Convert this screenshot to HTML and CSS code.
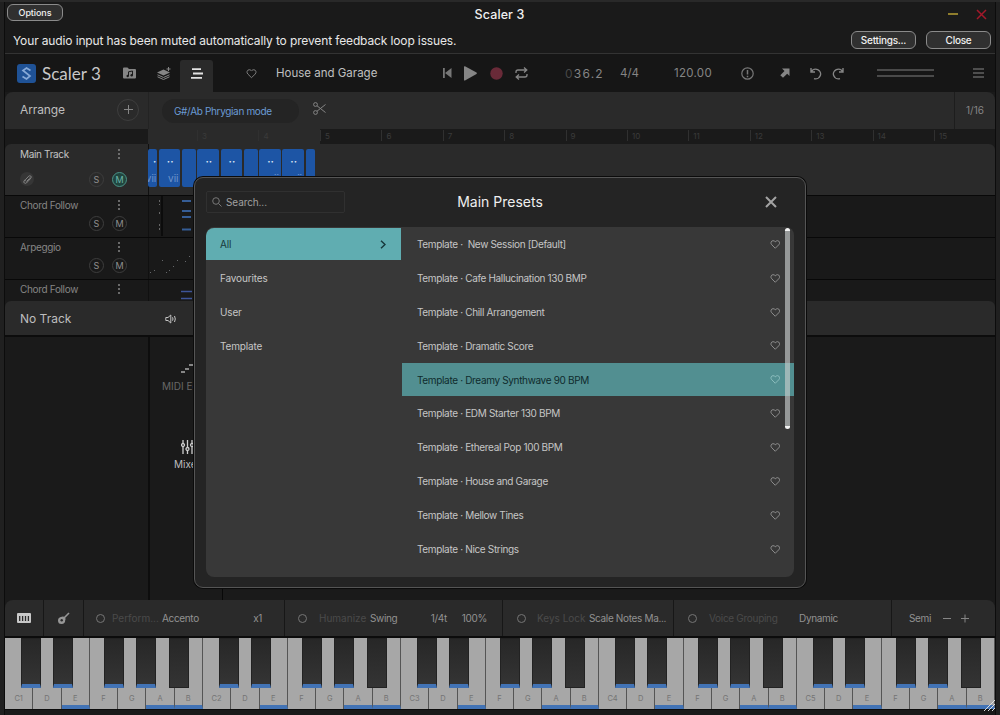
FILE: index.html
```html
<!DOCTYPE html>
<html lang="en">

<head>
    <meta charset="UTF-8">
    <meta name="viewport" content="width=device-width, initial-scale=1.0">
    <title>Scaler 3</title>
    <link rel="stylesheet" href="styles.css">
</head>

<body>

    <svg class="defs">
        <symbol id="heart" viewBox="0 0 12 12">
            <path d="M6 10.600 2 6.600C.3 4.900 1.100 2 3.400 1.900 4.600 1.800 5.500 2.500 6 3.300c.5-.8 1.400-1.500 2.600-1.400C10.900 2 11.700 4.900 10 6.600z" fill="none" stroke="currentColor" stroke-linejoin="round" />
        </symbol>
        <symbol id="dots" viewBox="0 0 4 12">
            <circle cx="2" cy="2" r="1" /><circle cx="2" cy="6" r="1" /><circle cx="2" cy="10" r="1" />
        </symbol>
    </svg>

    <div class="window">
        <header class="titlebar">
            <button class="pill options">Options</button>
            <h1>Scaler 3</h1>
            <svg class="window-buttons" width="40" height="12" fill="none">
                <path d="M1 6h10" stroke="#8f7d2c" stroke-width="2" />
                <path d="m30 2 9 9m0-9-9 9" stroke="#a3182a" stroke-width="1.500" />
            </svg>
        </header>

        <div class="notice">
            <p>Your audio input has been muted automatically to prevent feedback loop issues.</p>
            <button class="pill">Settings...</button>
            <button class="pill">Close</button>
        </div>

        <div class="toolbar">
            <svg class="logo" width="19" height="19" viewBox="0 0 19 19" fill="none">
                <rect width="19" height="19" rx="3" fill="#1f5296" />
                <path d="M13.500 6.500 9.500 4 6 6.500l7 5.500-3.500 3-4-2.500" stroke="#86a9d8" stroke-width="1.700" />
            </svg>
            <span class="brand">Scaler 3</span>
            <svg class="folder" width="13" height="12" viewBox="0 0 13 12">
                <path d="M0 1.500Q0 .5 1 .5h3.500L6 2h6q1 0 1 1v7.500q0 1-1 1H1q-1 0-1-1z" fill="#858585" />
                <path d="M5.500 9V4.800L9.500 4v4" stroke="#1a1a1a" fill="none" /><circle cx="4.700" cy="9" r="1.200" fill="#1a1a1a" /><circle cx="8.700" cy="8.200" r="1.200" fill="#1a1a1a" />
            </svg>
            <svg class="layers" width="14" height="13" viewBox="0 0 14 13">
                <path d="M6.500 2.500 13 5.500 6.500 8.500 0 5.500z" fill="#858585" />
                <path d="m.5 7.800 6 2.700 6-2.700M.5 9.800l6 2.700 6-2.700M11.500 0v4m-2-2h4" stroke="#858585" fill="none" />
            </svg>
            <div class="tab">
                <svg width="12" height="11" stroke="#e2e2e2" stroke-width="1.800"><path d="M1 1.200h9M2 5.500h10M0 9.800h11" /></svg>
            </div>
            <svg class="fav" width="11" height="11"><use href="#heart" /></svg>
            <span class="project">House and Garage</span>

            <div class="transport">
                <svg width="9" height="10" fill="#777"><path d="M0 0h1.800v10H0zM8.500 0v10L2 5z" /></svg>
                <svg width="13" height="15" fill="#858585"><path d="M0 .8Q0 0 1 .3l11.500 6.200q.8.8 0 1.500L1 14.500q-1 .3-1-.6z" /></svg>
                <svg width="13" height="13"><circle cx="6.500" cy="6.500" r="6.200" fill="#692a38" /></svg>
                <svg width="13" height="13" fill="none" stroke="#858585" stroke-width="1.300"><path d="M1 6V5q0-2 2-2h8.500M9 .5 11.800 3 9 5.500M12 7v1q0 2-2 2H1.500M4 7.500 1.200 10 4 12.500" /></svg>
            </div>
            <span class="position"><i>0</i>36.2</span>
            <span class="meter">4/4</span>
            <span class="tempo">120.00</span>
            <svg class="info" width="13" height="13" fill="none" stroke="#777" stroke-width="1.200"><circle cx="6.500" cy="6.500" r="5.700" /><path d="M6.500 3v4.500M6.500 8.700v1.500" stroke-width="1.500" /></svg>
            <svg class="arrow" width="10" height="10" fill="#858585"><path d="M2 .5h7.500V8L7.200 5.800 3 9.800.3 7.200l4.200-4.300z" /></svg>
            <svg class="undo" width="12" height="13" fill="none" stroke="#858585" stroke-width="1.400"><path d="M1 1v4h4M1.300 4.800A4.900 4.900 0 1 1 4 11.600" /></svg>
            <svg class="redo" width="12" height="13" fill="none" stroke="#858585" stroke-width="1.400"><path d="M11 1v4H7M10.700 4.800A4.900 4.900 0 1 0 8 11.600" /></svg>
            <div class="level"></div>
            <svg class="menu" width="11" height="10" stroke="#858585" stroke-width="1.200"><path d="M0 1h11M0 5h11M0 9h11" /></svg>
        </div>

        <div class="arrange">
            <div class="arrange-title">
                <h2>Arrange</h2>
                <button class="add"><svg width="9" height="9" stroke="#858585"><path d="M4.500 0v9M0 4.500h9" /></svg></button>
            </div>
            <span class="scale">G#/Ab Phrygian mode</span>
            <svg class="scissors" width="13" height="13" fill="none" stroke="#858585"><circle cx="2.500" cy="2.500" r="1.900" /><circle cx="2.500" cy="10.500" r="1.900" /><path d="m4 3.800 8.500 6.700M4 9.200l8.500-6.700" /></svg>
            <span class="grid-size">1/16</span>
        </div>

        <div class="ruler">
            <div class="region"><span>3</span><span>4</span></div>
            <span>5</span><span>6</span><span>7</span><span>8</span><span>9</span><span>10</span><span>11</span><span>12</span><span>13</span><span>14</span><span>15</span>
        </div>

        <div class="tracks">
            <div class="track main">
                <div class="track-head">
                    <div class="track-name">Main Track<svg class="more"><use href="#dots" /></svg></div>
                    <div class="track-buttons">
                        <span class="link"><svg width="9" height="9" viewBox="0 0 9 9" fill="none" stroke="#858585"><path d="M3.500 6.500 6.300 3.700M2.200 4.500 1 6q-.6 1.300.4 2 1 .7 2 0l3.300-3.500q.8-1 0-1.800M6 4.800 7.900 3q.8-1.200-.2-2-1-.6-2 .2L2.600 4.500q-.7 1 .2 1.700" /></svg></span>
                        <span class="round">S</span><span class="round muted">M</span>
                    </div>
                </div>
                <div class="clips">
                    <div class="clip first"><b>·</b>vii</div>
                    <div class="clip long"><b>··</b>vii</div>
                    <div class="clip short"></div>
                    <div class="clip long"><b>··</b>v</div>
                    <div class="clip long"><b>··</b>v</div>
                    <div class="clip short"></div>
                    <div class="clip long"><b>··</b>vii</div>
                    <div class="clip long"><b>··</b>vii</div>
                    <div class="clip last"></div>
                </div>
            </div>
            <div class="track">
                <div class="track-head">
                    <div class="track-name">Chord Follow<svg class="more"><use href="#dots" /></svg></div>
                    <div class="track-buttons"><span class="round">S</span><span class="round">M</span></div>
                </div>
                <svg class="notes" width="46" height="41">
                    <path d="M11.500 4v5m0 7v3m0 9v7" stroke="#666" stroke-dasharray="2 2" /><path d="M14 0v40" stroke="#000" />
                    <path d="M34 5h9M34 15h9M34 21h9M34 33.500h9" stroke="#355d96" stroke-width="2" />
                </svg>
            </div>
            <div class="track">
                <div class="track-head">
                    <div class="track-name">Arpeggio<svg class="more"><use href="#dots" /></svg></div>
                    <div class="track-buttons"><span class="round">S</span><span class="round">M</span></div>
                </div>
                <svg class="notes" width="46" height="41" fill="#65676a">
                    <path d="M2 34h1v1H2zM6 32h1v1H6zM14 22h1v1h-1zM18 34h1v1h-1zM21 32h1v1h-1zM25 28h1v1h-1zM29 22h1v1h-1zM37 23h1v1h-1zM41 18h1v1h-1z" />
                </svg>
            </div>
            <div class="track cut">
                <div class="track-head">
                    <div class="track-name">Chord Follow<svg class="more"><use href="#dots" /></svg></div>
                </div>
                <svg class="notes" width="46" height="21"><path d="M33 11.500h11M33 18.500h11" stroke="#3e5599" stroke-width="1.500" /></svg>
            </div>
        </div>

        <div class="selected-track">
            <h2>No Track</h2>
            <svg class="speaker" width="12" height="10" fill="none" stroke="#c4c4c4"><path d="M.8 3.500H3L5.800 1v8L3 6.500H.8zM7.500 3.300q1 1.700 0 3.400M9.500 2q1.600 3 0 6" /></svg>
        </div>

        <div class="editor">
            <div class="editor-side"></div>
            <nav class="editor-nav">
                <svg class="midi-icon" width="13" height="10" stroke="#aaa" stroke-width="1.500"><path d="M0 9h4M4 6h4M8 2h4" /></svg>
                <span class="dim">MIDI Edit</span>
                <svg class="mixer-icon" width="13" height="14" fill="none" stroke="#ccc" stroke-width="1.300"><path d="M2 0v3M2 7v7M6.500 0v7M6.500 11v3M11 0v3M11 7v7" /><circle cx="2" cy="5" r="1.500" /><circle cx="6.500" cy="9" r="1.500" /><circle cx="11" cy="5" r="1.500" /></svg>
                <span class="mixer-label">Mixer</span>
            </nav>
        </div>

        <div class="performance">
            <div class="cell view">
                <svg width="14" height="10"><rect width="14" height="10" rx="1" fill="#c8c8c8" /><path d="M2.700 3v5M5.600 3v5M8.500 3v5M11.400 3v5" stroke="#2a2a2a" stroke-width="1.300" /></svg>
            </div>
            <div class="cell view">
                <svg width="13" height="13"><path d="M4.800 4.800Q6.500 4 8 5.500q1.200 1.700.2 2.800Q8.300 11.800 4.500 12 1 12 1 8.500 1 5.500 4.800 4.800z" fill="#969696" /><path d="m5 8 7-7" stroke="#969696" stroke-width="1.600" /><circle cx="4.700" cy="8.300" r="1.200" fill="#2a2a2a" /></svg>
            </div>
            <div class="cell perform"><i class="dot"></i><em>Perform...</em><span>Accento</span><span class="right">x1</span></div>
            <div class="cell humanize"><i class="dot"></i><em>Humanize</em><span>Swing</span><span class="right">1/4t</span><span class="percent">100%</span></div>
            <div class="cell lock"><i class="dot"></i><em>Keys Lock</em><span>Scale Notes Ma...</span></div>
            <div class="cell voice"><i class="dot"></i><em>Voice Grouping</em><span>Dynamic</span></div>
            <div class="cell semi"><span>Semi</span>
                <svg width="28" height="9" stroke="#858585"><path d="M1 4.500h8M19 4.500h8M23 .5v8" /></svg>
            </div>
        </div>

        <div class="keyboard" id="keyboard"></div>
        <svg class="grip" width="11" height="11" stroke="#ddd"><path d="M0 11 11 0M4 11l7-7M8 11l3-3" /></svg>
    </div>

    <div class="presets">
        <div class="presets-header">
            <div class="search">
                <svg width="10" height="10" fill="none" stroke="#777"><circle cx="4" cy="4" r="3.300" /><path d="m6.500 6.500 3 3" /></svg>
                <span>Search...</span>
            </div>
            <h2>Main Presets</h2>
            <svg class="close" width="12" height="12" stroke="#a3a3a3" stroke-width="2"><path d="m1 1 10 10m0-10L1 11" /></svg>
        </div>
        <div class="presets-body">
            <ul class="categories">
                <li class="active">All<svg width="6" height="9" fill="none" stroke="#17393c" stroke-width="1.500"><path d="m1 .8 4 3.700-4 3.700" /></svg></li>
                <li>Favourites</li>
                <li>User</li>
                <li>Template</li>
            </ul>
            <ul class="items">
                <li>Template ·&nbsp; New Session [Default]<svg><use href="#heart" /></svg></li>
                <li>Template · Cafe Hallucination 130 BMP<svg><use href="#heart" /></svg></li>
                <li>Template · Chill Arrangement<svg><use href="#heart" /></svg></li>
                <li>Template · Dramatic Score<svg><use href="#heart" /></svg></li>
                <li class="active">Template · Dreamy Synthwave 90 BPM<svg><use href="#heart" /></svg></li>
                <li>Template · EDM Starter 130 BPM<svg><use href="#heart" /></svg></li>
                <li>Template · Ethereal Pop 100 BPM<svg><use href="#heart" /></svg></li>
                <li>Template · House and Garage<svg><use href="#heart" /></svg></li>
                <li>Template · Mellow Tines<svg><use href="#heart" /></svg></li>
                <li>Template · Nice Strings<svg><use href="#heart" /></svg></li>
            </ul>
            <div class="scrollbar"></div>
        </div>
    </div>

    <script>
        // five octaves, keys in the current scale get a blue marker
        const keyboard = document.getElementById('keyboard');
        const inScale = ['E', 'A', 'B'];
        const sharps = { C: true, D: true, F: true, G: true, A: false };

        for (let octave = 1; octave <= 5; octave++) {
            for (const note of 'CDEFGAB') {
                const key = document.createElement('div');
                key.className = 'key' + (inScale.includes(note) ? ' on' : '');
                key.textContent = note === 'C' ? note + octave : note;
                if (note in sharps) {
                    const sharp = document.createElement('div');
                    sharp.className = 'sharp sharp-' + note.toLowerCase() + (sharps[note] ? ' on' : '');
                    key.appendChild(sharp);
                }
                keyboard.appendChild(key);
            }
        }
    </script>

</body>

</html>
```
FILE: styles.css
```css
* {
    box-sizing: border-box;
}

body {
    margin: 0;
    width: 1000px;
    height: 715px;
    overflow: hidden;
    position: relative;
    background-color: #1a1a1a;
    color: #a0a0a0;
    font-family: Inter, "Liberation Sans", sans-serif;
    font-size: 10px;
    letter-spacing: -0.34px;
    white-space: nowrap;
}

h1,
h2,
p,
ul {
    margin: 0;
    padding: 0;
    font-weight: 400;
}

svg {
    display: block;
    flex: none;
}

.defs {
    position: absolute;
    width: 0;
    height: 0;
}

.window {
    height: 715px;
    padding: 0 5px;
    border-top: 2px solid #292929;
    box-shadow: inset 4px 0 #202020, inset 5px 0 #0c0c0c, inset -4px 0 #202020, inset -5px 0 #0c0c0c;
    display: flex;
    flex-direction: column;
}

/* title bar and notice */
.titlebar {
    height: 25px;
    display: grid;
    grid-template-columns: 1fr auto 1fr;
    align-items: center;
    padding: 0 8px 0 2px;
    letter-spacing: 0;
}

.titlebar h1 {
    margin-left: 5px;
    color: #f0f0f0;
    font-size: 12.5px;
    font-weight: 500;
    letter-spacing: 0.1px;
}

.window-buttons {
    justify-self: end;
    margin-top: -2px;
}

.pill {
    width: 65px;
    height: 18px;
    padding: 0;
    border: 1px solid #8b8b8b;
    border-radius: 6px;
    background-color: #303030;
    color: #f0f0f0;
    font: 500 10px Inter, sans-serif;
    letter-spacing: -0.25px;
}

.pill.options {
    width: 56px;
    height: 17px;
    font-size: 9px;
    letter-spacing: -0.1px;
    margin-top: -4px;
}

.notice {
    height: 27px;
    display: flex;
    align-items: center;
    gap: 10px;
    padding: 0 4px 0 8px;
    border-bottom: 1px solid #333;
}

.notice p {
    flex: 1;
    color: #e8e8e8;
    font-size: 12px;
    letter-spacing: -0.13px;
}

/* main toolbar */
.toolbar {
    height: 38px;
    display: flex;
    align-items: center;
    padding-left: 12px;
    background-color: #161616;
    letter-spacing: 0;
}

.brand {
    width: 76px;
    margin-left: 6px;
    color: #c8c8c8;
    font: 400 17px Lato, sans-serif;
}

.folder {
    margin-left: 5px;
}

.layers {
    margin-left: 21px;
}

.tab {
    width: 33px;
    height: 32px;
    margin: 6px 0 0 9px;
    border-radius: 3px 3px 0 0;
    background-color: #2a2a2a;
    display: flex;
    align-items: center;
    justify-content: center;
    padding-bottom: 6px;
}

.fav {
    margin-left: 33px;
    color: #858585;
}

.project {
    width: 167px;
    margin-left: 19px;
    color: #c0c0c0;
    font-size: 11.5px;
}

.transport {
    display: flex;
    align-items: center;
    gap: 12.3px;
    width: 122px;
}

.position {
    width: 55px;
    color: #858585;
    font-size: 12px;
    letter-spacing: 1.2px;
}

.position i {
    font-style: normal;
    color: #484848;
}

.meter {
    width: 54px;
    color: #858585;
    font-size: 11.5px;
}

.tempo {
    width: 67px;
    color: #858585;
    font-size: 11.5px;
    letter-spacing: 0.3px;
}

.arrow {
    margin-left: 26px;
}

.undo {
    margin-left: 20px;
}

.redo {
    margin-left: 10px;
}

.level {
    width: 57px;
    height: 8px;
    margin-left: 33px;
    border: solid #4a4a4a;
    border-width: 3px 0;
    border-width: 2px 0;
}

.menu {
    margin-left: 39px;
}

/* arrange header */
.arrange {
    height: 37px;
    display: flex;
    align-items: center;
    background-color: #2a2a2a;
    border-radius: 8px 8px 0 0;
}

.arrange-title {
    width: 144px;
    height: 37px;
    padding: 0 9px 2px 15px;
    display: flex;
    align-items: center;
    justify-content: space-between;
    border-right: 1px solid #232323;
}

.arrange h2,
.selected-track h2 {
    color: #bebebe;
    font-size: 12px;
    letter-spacing: -0.1px;
}

.add {
    width: 22px;
    height: 22px;
    padding: 0;
    border: 1px solid #3d3d3d;
    border-radius: 50%;
    background: none;
    display: flex;
    align-items: center;
    justify-content: center;
}

.scale {
    width: 137px;
    height: 24px;
    line-height: 24px;
    margin-left: 13px;
    padding-left: 12px;
    border-radius: 12px;
    background-color: #242424;
    color: #6b9bd4;
}

.scissors {
    margin: -4px 0 0 14px;
}

.grid-size {
    width: 41px;
    height: 37px;
    line-height: 36px;
    margin-left: auto;
    padding-left: 11px;
    border-left: 1px solid #1d1d1d;
    color: #858585;
    letter-spacing: 0;
}

.ruler {
    height: 15px;
    margin-left: 143px;
    display: flex;
    overflow: hidden;
    background-color: #1a1a1a;
    font-size: 8px;
    line-height: 15px;
    letter-spacing: 0;
    color: #3a3a3a;
}

.ruler span {
    flex: none;
    width: 61.4px;
    padding-left: 5px;
    background: linear-gradient(#303030, #303030) 0 1px / 1px 11px no-repeat;
}

.region {
    flex: none;
    width: 172px;
    padding-left: 49px;
    display: flex;
    background-color: #2a2a2a;
}

/* tracks */
.tracks {
    height: 157px;
}

.track {
    height: 42px;
    display: flex;
    background-color: #191919;
    border-bottom: 1px solid #080808;
    color: #858585;
}

.track.main {
    height: 52px;
    background-color: #2a2a2a;
    border-radius: 6px 6px 0 0;
}

.track.cut {
    height: 21px;
    border-bottom: 0;
}

.track-head {
    width: 144px;
    padding: 2px 16px 0 15px;
    border-right: 1px solid #101010;
}

.main .track-head {
    padding-top: 3px;
}

.track-name {
    height: 13px;
    display: flex;
    align-items: center;
    justify-content: space-between;
}

.main .track-name {
    color: #c4c4c4;
}

.more {
    width: 4px;
    height: 12px;
    margin: 1px 11px 0 0;
    fill: #858585;
}

.track-buttons {
    display: flex;
    justify-content: flex-end;
    gap: 8px;
    margin: 5px 5px 0 0;
}

.main .track-buttons {
    margin-top: 12px;
}

.round {
    width: 15px;
    height: 15px;
    line-height: 13px;
    border: 1px solid #3d3d3d;
    border-radius: 50%;
    text-align: center;
    font-size: 9px;
    letter-spacing: 0;
    color: #909090;
}

.round.muted {
    background-color: #20463f;
    border-color: #4b9287;
    color: #6fb5a9;
}

.link {
    width: 14px;
    height: 14px;
    margin-right: auto;
    border-radius: 50%;
    background-color: #363636;
    display: flex;
    align-items: center;
    justify-content: center;
}

.clips {
    display: flex;
    gap: 1.5px;
    margin-left: -1px;
    padding-top: 5px;
}

.notes {
    margin-left: -1px;
}

.clip {
    height: 38px;
    padding-right: 2px;
    border-radius: 2px;
    background-color: #1d55a5;
    overflow: hidden;
    color: #6d94cb;
    font-size: 10px;
    line-height: 13px;
    letter-spacing: 0;
    text-align: right;
}

.clip b {
    display: block;
    height: 23px;
    line-height: 24px;
    padding-right: 5px;
    color: #dbe6f5;
}

.clip.first,
.clip.last {
    width: 9.3px;
}

.clip.first {
    padding-right: 1px;
    direction: rtl;
}

.clip.first b {
    padding-right: 0;
}

.clip.long {
    width: 21.7px;
}

.clip.short {
    width: 13.9px;
}

/* selected track and editor */
.selected-track {
    height: 36px;
    display: flex;
    align-items: center;
    padding-left: 15px;
    background-color: #2a2a2a;
    border-radius: 6px 6px 0 0;
    border-bottom: 2px solid #0c0c0c;
}

.selected-track h2 {
    width: 145px;
    letter-spacing: 0;
}

.speaker {
    margin-top: 2px;
}

.editor {
    height: 263px;
    display: flex;
}

.editor-side {
    width: 145px;
    border-right: 2px solid #0d0d0d;
}

.editor-nav {
    width: 73px;
    padding-top: 26px;
    border-right: 1px solid #080808;
    overflow: hidden;
    letter-spacing: 0;
}

.midi-icon,
.mixer-icon {
    margin-left: 31px;
}

.dim {
    display: block;
    margin: 6px 0 47px 12px;
    color: #686868;
    line-height: 14px;
}

.mixer-label {
    display: block;
    margin: 4px 0 0 24px;
    color: #bdbdbd;
}

/* performance bar */
.performance {
    height: 38px;
    display: flex;
    background-color: #2a2a2a;
    border-radius: 8px 8px 0 0;
    border-bottom: 2px solid #0c0c0c;
    overflow: hidden;
}

.cell {
    display: flex;
    align-items: center;
    border-right: 1px solid #171717;
    color: #929292;
}

.cell em {
    font-style: normal;
    color: #4a4a4a;
    letter-spacing: 0;
}

.view {
    width: 39px;
    justify-content: center;
}

.view + .view {
    width: 40px;
}

.dot {
    width: 9px;
    height: 9px;
    margin-left: 12px;
    border: 1px solid #757575;
    border-radius: 50%;
}

.right {
    margin-left: auto;
}

.perform {
    width: 201px;
    padding-right: 22px;
}

.perform em {
    width: 50px;
    margin-left: 7px;
}

.humanize {
    width: 218px;
    padding-right: 15px;
}

.humanize .dot {
    margin-left: 13px;
}

.humanize em {
    width: 51px;
    margin-left: 12px;
}

.percent {
    margin-left: 15px;
}

.lock {
    width: 171px;
}

.lock .dot,
.voice .dot {
    margin-left: 14px;
}

.lock em {
    width: 52px;
    margin-left: 11px;
}

.voice {
    width: 218px;
}

.voice em {
    width: 90px;
    margin-left: 12px;
    letter-spacing: -0.3px;
}

.semi {
    flex: 1;
    padding-left: 17px;
    gap: 11px;
    border-right: 0;
}

/* keyboard */
.keyboard {
    height: 72px;
    display: flex;
    background-color: #222;
    border-bottom: 1px solid #0c0c0c;
}

.key {
    flex: 1;
    position: relative;
    padding-top: 55px;
    background-color: #a7a7a7;
    border-right: 1px solid #555;
    text-align: center;
    font-size: 7.5px;
    line-height: 12px;
    letter-spacing: 0;
    color: #747474;
}

.key.on {
    border-bottom: 4px solid #4273b5;
}

.sharp {
    position: absolute;
    z-index: 1;
    top: 0;
    width: 20px;
    height: 50px;
    border: 1px solid #222;
    background: linear-gradient(#272727, #343434);
}

.sharp.on {
    border-bottom: 4px solid #4273b5;
}

.sharp-c {
    left: 16px;
}

.sharp-d {
    left: 20px;
}

.sharp-f {
    left: 14px;
}

.sharp-g {
    left: 18px;
}

.sharp-a {
    left: 22.5px;
}

.grip {
    position: absolute;
    right: 5px;
    bottom: 4px;
}

/* presets dialog */
.presets {
    position: absolute;
    z-index: 2;
    left: 194px;
    top: 177px;
    width: 612px;
    height: 411px;
    padding: 0 11px;
    border: 1px solid #555;
    border-radius: 9px;
    box-shadow: 0 0 0 1px #0b0b0b;
    background-color: #242424;
}

.presets-header {
    height: 49px;
    padding-bottom: 2px;
    display: grid;
    grid-template-columns: 1fr auto 1fr;
    align-items: center;
}

.search {
    width: 139px;
    height: 22px;
    padding-left: 5px;
    border: 1px solid #303030;
    border-radius: 2px;
    display: flex;
    align-items: center;
    gap: 4px;
    letter-spacing: -0.1px;
}

.presets-header h2 {
    color: #efefef;
    font-size: 14px;
    letter-spacing: 0;
}

.close {
    justify-self: end;
    margin-right: 17px;
}

.presets-body {
    height: 350px;
    padding-top: 1px;
    display: flex;
    position: relative;
    border-radius: 8px;
    background-color: #383838;
    overflow: hidden;
    color: #c6c6c6;
}

.presets-body ul {
    list-style: none;
    display: flex;
    flex-direction: column;
    gap: 1.5px;
}

.presets-body li {
    height: 32.35px;
    display: flex;
    align-items: center;
    justify-content: space-between;
    padding: 0 14px 0 15px;
}

.categories {
    width: 195px;
    letter-spacing: -0.15px;
}

.presets-body .categories li {
    padding-left: 14px;
    padding-right: 15px;
}

.categories .active {
    border-top-left-radius: 8px;
    background-color: #60adb1;
    color: #17393c;
}

.items {
    flex: 1;
    margin-left: 1px;
}

.items svg {
    width: 10.5px;
    height: 10.5px;
    color: #999;
}

.items .active {
    background-color: #528f91;
    color: #0f2b2d;
}

.items .active svg {
    color: #94c3c4;
}

.scrollbar {
    position: absolute;
    right: 4px;
    top: 1px;
    width: 5px;
    height: 201px;
    border-radius: 3px;
    border: solid #f2f2f2;
    border-width: 3px 0;
    background-color: rgba(200, 205, 205, 0.65);
}
```
